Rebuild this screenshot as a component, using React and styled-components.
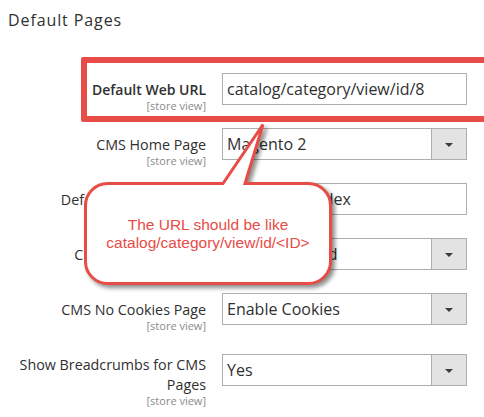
import React from 'react';
import styled, { createGlobalStyle } from 'styled-components';

const GlobalStyle = createGlobalStyle`
  html, body {
    margin: 0;
    padding: 0;
    background: #ffffff;
  }
  body {
    font-family: "Open Sans", "Liberation Sans", sans-serif;
    color: #303030;
  }
`;

const Page = styled.div`
  position: relative;
  width: 484px;
  height: 417px;
  padding: 10px 0 0 8px;
  box-sizing: border-box;
  overflow: hidden;
  background: #fff;
`;

const Heading = styled.div`
  font-size: 16px;
  line-height: 20px;
  letter-spacing: 0.9px;
  color: #303030;
  margin-bottom: 43px;
`;

const Form = styled.div`
  display: flex;
  flex-direction: column;
  gap: 17px;
`;

const Row = styled.div`
  position: relative;
  display: flex;
  align-items: flex-start;
  gap: 16px;

  ${(p) => p.$highlight && `
    &::after {
      content: '';
      position: absolute;
      top: -16px;
      left: 73px;
      right: -11px;
      bottom: -11px;
      border: 6px solid #e84c47;
      border-radius: 2px;
      pointer-events: none;
    }
  `}
`;

const LabelCol = styled.div`
  width: 198px;
  flex: none;
  padding-top: 7px;
  text-align: right;
`;

const Label = styled.div`
  font-size: ${(p) => (p.$bold ? '14px' : '14.3px')};
  line-height: 20px;
  font-weight: ${(p) => (p.$bold ? 600 : 400)};
  color: #303030;
`;

const Scope = styled.div`
  font-size: 11px;
  line-height: 11px;
  color: #8a8a8a;
`;

const Control = styled.div`
  width: 245px;
  height: 32px;
  flex: none;
  box-sizing: border-box;
  margin-top: ${(p) => p.$offset || 0}px;
  border: 1px solid #adadad;
  background: #fff;
  display: flex;
  align-items: stretch;
`;

const Value = styled.div`
  flex: 1;
  padding-left: 4px;
  font-size: 16px;
  line-height: 30px;
  color: #303030;
  white-space: nowrap;
  overflow: hidden;
`;

const ArrowBox = styled.div`
  width: 34px;
  flex: none;
  border-left: 1px solid #adadad;
  background: #e3e3e3;
  display: flex;
  align-items: center;
  justify-content: center;

  &::before {
    content: '';
    border-left: 4px solid transparent;
    border-right: 4px solid transparent;
    border-top: 4px solid #3b3b3b;
    margin-top: 1px;
  }
`;

const Callout = styled.div`
  position: absolute;
  left: 80px;
  top: 118px;
  width: 262px;
  height: 180px;
  pointer-events: none;
`;

const CalloutShape = styled.svg`
  position: absolute;
  inset: 0;
  overflow: visible;
  filter: drop-shadow(3px 3px 2px rgba(0, 0, 0, 0.45));
`;

const CalloutText = styled.div`
  position: absolute;
  left: 4px;
  top: 64px;
  width: 248px;
  height: 103px;
  display: flex;
  flex-direction: column;
  align-items: center;
  justify-content: center;
  font-family: "Liberation Sans", Arial, sans-serif;
  font-size: 15.5px;
  line-height: 18px;
  color: #e84c47;
  text-align: center;
`;

const fields = [
  { label: 'Default Web URL', value: 'catalog/category/view/id/8', bold: true, highlight: true },
  { label: 'CMS Home Page', value: 'Magento 2', select: true },
  { label: 'Default No Route URL', value: 'cms/index/index' },
  { label: 'CMS No Route Page', value: '404 Not Found', select: true },
  { label: 'CMS No Cookies Page', value: 'Enable Cookies', select: true },
  { label: ['Show Breadcrumbs for CMS', 'Pages'], value: 'Yes', select: true, offset: 6 },
];

export default function App() {
  return (
    <>
      <GlobalStyle />
      <Page>
        <Heading>Default Pages</Heading>
        <Form>
          {fields.map((f, i) => (
            <Row key={i} $highlight={f.highlight}>
              <LabelCol>
                {(Array.isArray(f.label) ? f.label : [f.label]).map((l) => (
                  <Label key={l} $bold={f.bold}>{l}</Label>
                ))}
                <Scope>[store view]</Scope>
              </LabelCol>
              <Control $offset={f.offset}>
                <Value>{f.value}</Value>
                {f.select && <ArrowBox />}
              </Control>
            </Row>
          ))}
        </Form>

        <Callout>
          <CalloutShape viewBox="80 118 262 180" width="262" height="180">
            <path
              d="M107.5 183.5 H223 L263 124.5 L245 183.5 H308.5 A22 22 0 0 1 330.5 205.5 V261.5 A22 22 0 0 1 308.5 283.5 H107.5 A22 22 0 0 1 85.5 261.5 V205.5 A22 22 0 0 1 107.5 183.5 Z"
              fill="#ffffff"
              stroke="#e84c47"
              strokeWidth="3"
              strokeLinejoin="miter"
            />
          </CalloutShape>
          <CalloutText>
            <div>The URL should be like</div>
            <div>catalog/category/view/id/&lt;ID&gt;</div>
          </CalloutText>
        </Callout>
      </Page>
    </>
  );
}
